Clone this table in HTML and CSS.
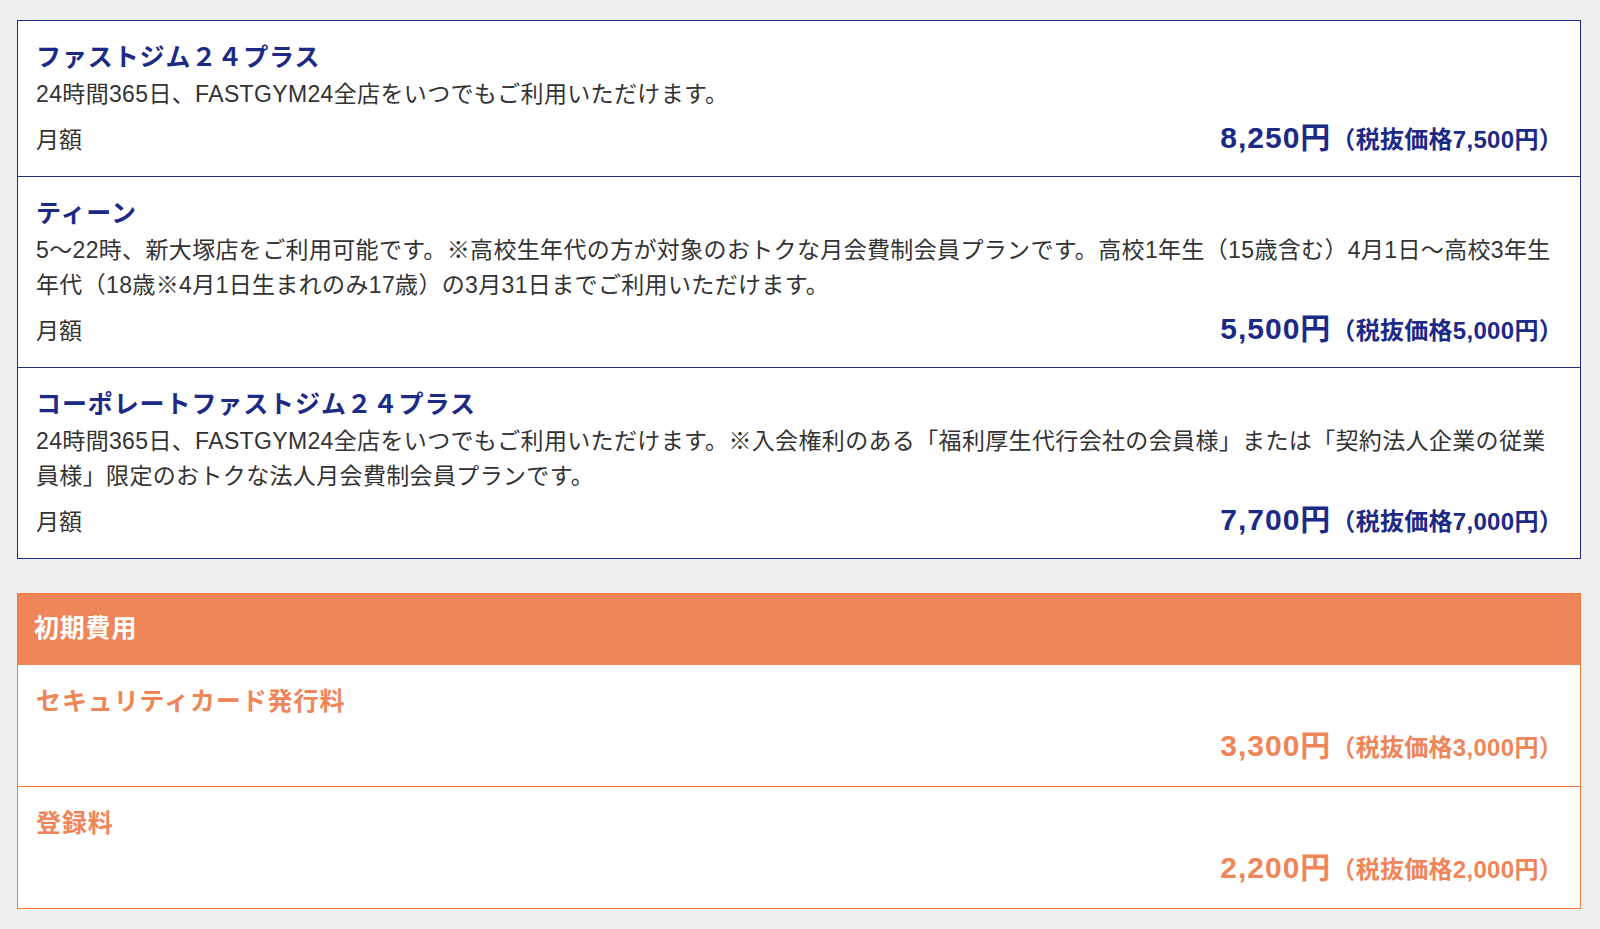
FILE: index.html
```html
<!DOCTYPE html>
<html lang="ja">
<head>
<meta charset="utf-8">
<title>料金プラン</title>
<link rel="stylesheet" href="styles.css">
</head>
<body>
<main class="page">
  <section class="plan-card plan-card--navy">
    <div class="plan-row">
      <h3 class="plan-name">ファストジム２４プラス</h3>
      <p class="plan-desc">24時間365日、FASTGYM24全店をいつでもご利用いただけます。</p>
      <div class="plan-price">
        <span class="price-label">月額</span>
        <span class="price"><span class="amount">8,250円</span><span class="tax">（税抜価格7,500円）</span></span>
      </div>
    </div>
    <div class="plan-row">
      <h3 class="plan-name">ティーン</h3>
      <p class="plan-desc">5〜22時、新大塚店をご利用可能です。※高校生年代の方が対象のおトクな月会費制会員プランです。高校1年生（15歳含む）4月1日〜高校3年生年代（18歳※4月1日生まれのみ17歳）の3月31日までご利用いただけます。</p>
      <div class="plan-price">
        <span class="price-label">月額</span>
        <span class="price"><span class="amount">5,500円</span><span class="tax">（税抜価格5,000円）</span></span>
      </div>
    </div>
    <div class="plan-row">
      <h3 class="plan-name">コーポレートファストジム２４プラス</h3>
      <p class="plan-desc">24時間365日、FASTGYM24全店をいつでもご利用いただけます。※入会権利のある「福利厚生代行会社の会員様」または「契約法人企業の従業員様」限定のおトクな法人月会費制会員プランです。</p>
      <div class="plan-price">
        <span class="price-label">月額</span>
        <span class="price"><span class="amount">7,700円</span><span class="tax">（税抜価格7,000円）</span></span>
      </div>
    </div>
  </section>

  <section class="plan-card plan-card--orange">
    <h2 class="card-head">初期費用</h2>
    <div class="plan-row">
      <h3 class="plan-name">セキュリティカード発行料</h3>
      <div class="plan-price plan-price--end">
        <span class="price"><span class="amount">3,300円</span><span class="tax">（税抜価格3,000円）</span></span>
      </div>
    </div>
    <div class="plan-row">
      <h3 class="plan-name">登録料</h3>
      <div class="plan-price plan-price--end">
        <span class="price"><span class="amount">2,200円</span><span class="tax">（税抜価格2,000円）</span></span>
      </div>
    </div>
  </section>
</main>
</body>
</html>
```

FILE: styles.css
```css
* {
  box-sizing: border-box;
}

html, body {
  margin: 0;
  padding: 0;
  background: #efefef;
}

body {
  font-family: "Liberation Sans", "Noto Sans CJK JP", sans-serif;
  color: #333333;
}

.page {
  padding: 20px 19px 21px 17px;
  display: flex;
  flex-direction: column;
  gap: 34px;
}

.plan-card {
  background: #ffffff;
  border: 1px solid #1f2a85;
}

.plan-row {
  padding: 18px 17px 15px 18px;
  border-bottom: 1px solid #1f2a85;
}

.plan-row:last-child {
  border-bottom: none;
}

.plan-name {
  margin: 0 0 2px;
  font-size: 25px;
  line-height: 36px;
  font-weight: 700;
  letter-spacing: 0.9px;
  color: #1c2a86;
}

.plan-desc {
  margin: 0;
  padding-right: 6px;
  font-size: 23px;
  line-height: 35px;
  letter-spacing: 0.35px;
  color: #333333;
}

.plan-price {
  margin-top: 7px;
  height: 42px;
  display: flex;
  align-items: center;
  justify-content: space-between;
}

.plan-price--end {
  justify-content: flex-end;
}

.price-label {
  font-size: 23px;
  line-height: 42px;
  color: #333333;
}

.price {
  font-weight: 700;
  color: #1c2a86;
  line-height: 42px;
  white-space: nowrap;
}

.amount {
  font-size: 30px;
  letter-spacing: 1px;
}

.tax {
  font-size: 24px;
  letter-spacing: 0.3px;
}

/* orange card */
.plan-card--orange {
  border-color: #f47a3a;
}

.plan-card--orange .plan-row {
  border-bottom-color: #f47a3a;
  padding-bottom: 17px;
}

.plan-card--orange .plan-row:last-child {
  border-bottom: none;
  padding-bottom: 17px;
}

.plan-card--orange .plan-price {
  margin-top: 8px;
}

.plan-card--orange .plan-name,
.plan-card--orange .price {
  color: #ef8659;
}

.card-head {
  margin: 0;
  padding: 15px 16px 18px;
  background: #ef8659;
  color: #ffffff;
  font-size: 25px;
  line-height: 38px;
  font-weight: 700;
  letter-spacing: 0.8px;
}
```
